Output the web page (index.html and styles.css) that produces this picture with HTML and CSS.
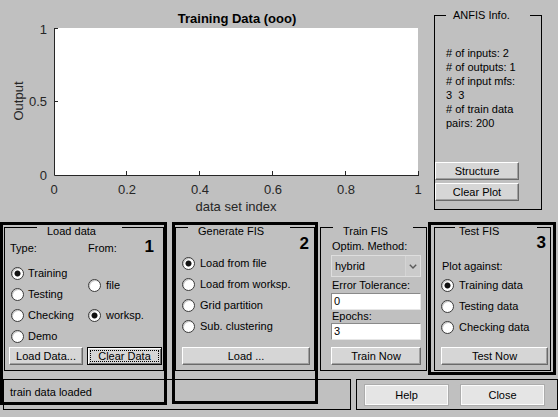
FILE: index.html
```html
<!DOCTYPE html>
<html>
<head>
<meta charset="utf-8">
<title>ANFIS Editor</title>
<link rel="stylesheet" href="styles.css">
</head>
<body>
<div class="top">
  <svg class="plot" width="434" height="217" viewBox="0 0 434 217">
    <text class="ttl" x="237" y="23" text-anchor="middle">Training Data (ooo)</text>
    <rect x="54" y="28" width="364" height="147" fill="#fff"/>
    <path d="M54.5 28V175.5H419" stroke="#262626" fill="none"/>
    <path d="M54 28.5h4M54 101.5h4M126.5 175v-4M199.5 175v-4M272.5 175v-4M345.5 175v-4M418.5 175v-4" stroke="#262626" fill="none"/>
    <text x="47" y="34" text-anchor="end">1</text>
    <text x="47" y="106" text-anchor="end">0.5</text>
    <text x="47" y="180" text-anchor="end">0</text>
    <text x="54" y="194" text-anchor="middle">0</text>
    <text x="127" y="194" text-anchor="middle">0.2</text>
    <text x="200" y="194" text-anchor="middle">0.4</text>
    <text x="273" y="194" text-anchor="middle">0.6</text>
    <text x="346" y="194" text-anchor="middle">0.8</text>
    <text x="418" y="194" text-anchor="middle">1</text>
    <text x="236" y="211" text-anchor="middle">data set index</text>
    <text transform="translate(23 101) rotate(-90)" text-anchor="middle">Output</text>
  </svg>
  <fieldset class="panel info">
    <legend>ANFIS Info.</legend>
    <div class="info-lines"># of inputs: 2
# of outputs: 1
# of input mfs:
3  3
# of train data
pairs: 200</div>
    <button class="btn info-btn first">Structure</button>
    <button class="btn info-btn second">Clear Plot</button>
  </fieldset>
</div>

<div class="panels">
  <fieldset class="panel p1">
    <legend>Load data</legend>
    <div class="p1-body">
      <div class="col-type">
        <div class="lbl">Type:</div>
        <div class="radios">
          <div class="radio"><span class="rb on"></span>Training</div>
          <div class="radio"><span class="rb"></span>Testing</div>
          <div class="radio"><span class="rb"></span>Checking</div>
          <div class="radio"><span class="rb"></span>Demo</div>
        </div>
      </div>
      <div class="col-from">
        <div class="lbl">From:</div>
        <div class="radio r-file"><span class="rb"></span>file</div>
        <div class="radio r-ws"><span class="rb on"></span>worksp.</div>
      </div>
      <div class="num n1">1</div>
    </div>
    <div class="btnrow p1-btns">
      <button class="btn w74">Load Data...</button>
      <button class="btn focus w75"><span>Clear Data</span></button>
    </div>
  </fieldset>

  <fieldset class="panel p2">
    <legend>Generate FIS</legend>
    <div class="num n2">2</div>
    <div class="radios p2-radios">
      <div class="radio"><span class="rb on"></span>Load from file</div>
      <div class="radio"><span class="rb"></span>Load from worksp.</div>
      <div class="radio"><span class="rb"></span>Grid partition</div>
      <div class="radio"><span class="rb"></span>Sub. clustering</div>
    </div>
    <button class="btn p2-btn">Load ...</button>
  </fieldset>

  <fieldset class="panel p3">
    <legend>Train FIS</legend>
    <div class="p3-body">
      <div class="lbl l-optim">Optim. Method:</div>
      <div class="select">
        <span class="val">hybrid</span>
        <span class="arr"><svg width="8" height="5" viewBox="0 0 8 5"><path d="M0.8 0.8L4 4L7.2 0.8" stroke="#5a5a5a" stroke-width="1.4" fill="none"/></svg></span>
      </div>
      <div class="lbl l-err">Error Tolerance:</div>
      <div class="field f-err">0</div>
      <div class="lbl">Epochs:</div>
      <div class="field">3</div>
      <button class="btn p3-btn">Train Now</button>
    </div>
  </fieldset>

  <fieldset class="panel p4">
    <legend>Test FIS</legend>
    <div class="num n3">3</div>
    <div class="lbl l-plot">Plot against:</div>
    <div class="radios p4-radios">
      <div class="radio"><span class="rb on"></span>Training data</div>
      <div class="radio"><span class="rb"></span>Testing data</div>
      <div class="radio"><span class="rb"></span>Checking data</div>
    </div>
    <button class="btn p4-btn">Test Now</button>
  </fieldset>
</div>

<div class="statusrow">
  <div class="status">train data loaded</div>
  <div class="actions">
    <button class="wbtn">Help</button>
    <button class="wbtn close">Close</button>
  </div>
</div>

<div class="mark m1"></div>
<div class="mark m2"></div>
<div class="mark m3"></div>
</body>
</html>
```

FILE: styles.css
```css
* { box-sizing: border-box; }
html, body { margin: 0; padding: 0; }
body {
  width: 558px;
  height: 417px;
  overflow: hidden;
  position: relative;
  background: #c0c0c0;
  color: #000;
  font-family: "Liberation Sans", Arial, sans-serif;
  font-size: 11px;
  line-height: 13px;
}

/* ---------- top: plot + info ---------- */
.top { display: flex; height: 217px; }
.plot { display: block; flex: none; }
.plot text {
  font-family: "Liberation Sans", Arial, sans-serif;
  font-size: 13px;
  fill: #262626;
}
.plot .ttl { font-weight: bold; fill: #000; }

.panel {
  margin: 0;
  padding: 0;
  border: 1px solid #000;
  min-width: 0;
  flex: none;
}
.panel legend {
  padding: 8px 0 0 10px;
  line-height: 13px;
  white-space: nowrap;
}

.info { margin: 9px 0 0 0; width: 108px; height: 201px; }
.info legend { padding: 0 0 0 7px; margin-left: 11px; width: 84px; }
.info-lines { margin: 24px 0 0 11px; line-height: 14px; white-space: pre; }
.info-btn { margin: 0 0 0 11px; width: 84px; height: 19px; line-height: 17px; }
.info-btn.first { margin-top: 32px; }
.info-btn.second { margin-top: 3px; }

/* ---------- classic buttons ---------- */
.btn {
  display: block;
  height: 18px;
  margin: 0;
  padding: 0;
  font: 11px "Liberation Sans", Arial, sans-serif;
  color: #000;
  line-height: 16px;
  text-align: center;
  background: #d6d6d6;
  border: 1px solid;
  border-color: #fff #6a6a6a #6a6a6a #fff;
  box-shadow: inset -1px -1px #a0a0a0;
}
.btn.focus {
  border-color: #000;
  box-shadow: inset 1px 1px #fff, inset -1px -1px #6a6a6a;
  padding: 2px;
}
.btn.focus span {
  display: block;
  height: 12px;
  line-height: 10px;
  border: 1px dotted #000;
}

/* ---------- bottom panels ---------- */
.panels { display: flex; height: 162px; }
.p1 { margin-left: 4px; width: 160px; height: 154px; }
.p2 { margin-left: 11px; width: 140px; height: 154px; }
.p3 { margin-left: 5px; width: 107px; height: 154px; }
.p4 { margin-left: 7px; width: 117px; height: 154px; }

.p1 legend { margin-left: 32px; width: 85px; }
.p2 legend { margin-left: 12px; width: 102px; }
.p3 legend { margin-left: 12px; width: 80px; }
.p4 legend { margin-left: 20px; width: 82px; padding-left: 4px; }

.lbl { height: 13px; white-space: nowrap; }

.radio {
  display: flex;
  align-items: center;
  gap: 5px;
  height: 21px;
  white-space: nowrap;
}
.rb {
  flex: none;
  width: 13px;
  height: 13px;
  border-radius: 50%;
  border: 1px solid #3a3a3a;
  background: #fff;
  box-shadow: inset 1px 1px #c8c8c8;
}
.rb.on {
  background: radial-gradient(circle, #111 0, #111 2.6px, #fff 3.4px);
}

.num {
  font-weight: bold;
  font-size: 17px;
  line-height: 12px;
  text-align: right;
}

/* panel 1 */
.p1-body { display: flex; align-items: flex-start; }
.col-type { width: 83px; margin-top: 4px; padding-left: 6px; }
.col-type .lbl { margin-left: -1px; }
.col-type .radios { margin-top: 8px; }
.col-type .radio { gap: 4px; }
.col-from { margin-top: 4px; }
.r-file { margin-top: 20px; }
.r-ws { margin-top: 9px; }
.n1 { margin: 3px 9px 0 auto; }
.p1-btns { display: flex; gap: 4px; margin-left: 4px; }
.w74 { width: 74px; }
.w75 { width: 75px; }

/* panel 2 */
.n2 { margin: 0 5px 0 0; }
.p2-radios { margin-top: 3px; padding-left: 6px; }
.p2-btn { margin: 10px 0 0 6px; width: 128px; }

/* panel 3 */
.p3-body { padding-left: 10px; }
.p3-body .lbl { margin-left: 1px; }
.l-optim { margin-top: 2px; }
.select {
  display: flex;
  width: 90px;
  height: 22px;
  margin-top: 2px;
  border: 1px solid #dedede;
  background: #c6c6c6;
}
.select .val { flex: 1; padding-left: 3px; line-height: 20px; }
.select .arr {
  width: 15px;
  display: flex;
  align-items: center;
  justify-content: center;
  border-left: 1px solid #d4d4d4;
  background: #cbcbcb;
}
.l-err { margin-top: 2px; }
.field {
  width: 90px;
  height: 17px;
  background: #fff;
  border: 1px solid;
  border-color: #8a8a8a #e6e6e6 #e6e6e6 #8a8a8a;
  padding-left: 2px;
  line-height: 15px;
}
.f-err { margin-top: 1px; }
.p3-btn { margin-top: 7px; width: 90px; }

/* panel 4 */
.n3 { margin: -1px 4px 0 0; }
.l-plot { margin-top: 11px; padding-left: 7px; }
.p4-radios { margin-top: 2px; padding-left: 6px; }
.p4-btn { margin: 9px 0 0 6px; width: 107px; }

/* ---------- status row ---------- */
.statusrow { display: flex; height: 31px; }
.status {
  margin-left: 3px;
  width: 348px;
  height: 31px;
  border: 1px solid #000;
  padding: 6px 0 0 6px;
}
.actions {
  display: flex;
  gap: 11px;
  margin-left: 5px;
  width: 202px;
  height: 31px;
  border: 1px solid #000;
  padding: 4px 0 0 7px;
}
.wbtn {
  width: 85px;
  height: 22px;
  margin: 0;
  padding: 0;
  font: 11px "Liberation Sans", Arial, sans-serif;
  color: #000;
  background: #e5e5e5;
  border: 1px solid #acacac;
  box-shadow: inset 0 0 0 1px #fbfbfb;
}

/* ---------- hand-drawn annotation frames ---------- */
.mark { position: absolute; border: 3px solid #000; }
.m1 { left: 0; top: 222px; width: 167px; height: 183px; }
.m2 { left: 172px; top: 222px; width: 146px; height: 182px; }
.m3 { left: 428px; top: 222px; width: 128px; height: 153px; }
```
